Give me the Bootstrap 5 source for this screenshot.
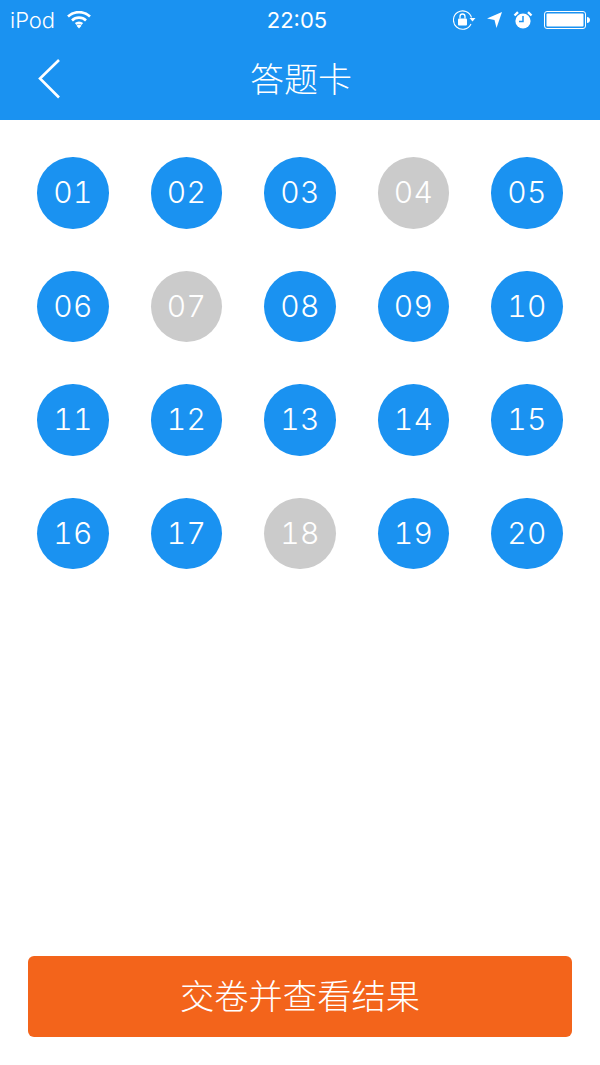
<!DOCTYPE html>
<html lang="zh">
<head>
<meta charset="utf-8">
<title>答题卡</title>
<link rel="stylesheet" href="https://cdn.jsdelivr.net/npm/bootstrap@5.3.0/dist/css/bootstrap.min.css">
<style>
html,body{height:100%;}
body{font-family:Inter,"Noto Sans CJK SC",sans-serif;background:#fff;overflow:hidden;}
.app-screen{height:1065px;width:600px;}
.top-area{background:#1a92f1;color:#fff;height:120px;flex:none;}
.status-row{height:40px;padding:0 10px;font-size:22px;font-weight:300;line-height:40px;}
.status-left{width:197px;gap:12px;}
.status-right{width:203px;gap:11px;}
.clock{font-size:22px;font-weight:400;}
.title-row{height:80px;padding:0 0 4px 2px;}
.title-text{font-family:"Noto Sans CJK SC",sans-serif;font-size:34px;font-weight:300;line-height:1;margin:0;}
.back-link{left:37px;top:18px;width:26px;height:42px;}
.sheet{display:grid;grid-template-columns:repeat(5,71.5px);gap:42px;padding:37.25px 37.25px 0;}
.num-dot{width:71.5px;height:71.5px;border-radius:50%;background:#1a92f1;color:#fff;font-family:Inter,sans-serif;font-size:30px;font-weight:280;font-variant-numeric:tabular-nums;letter-spacing:.4px;padding-bottom:1px;}
.num-dot.skipped{background:#cbcbcb;}
.submit-btn{width:544px;height:81px;margin:0 28px 28px;padding:0 0 4px;background:#f3641b;border:0;border-radius:6px;color:#fff;font-family:"Noto Sans CJK SC",sans-serif;font-size:34.300px;font-weight:300;line-height:1;}
.submit-btn:hover{background:#f3641b;color:#fff;}
</style>
</head>
<body>
<div class="app-screen d-flex flex-column">
  <header class="top-area">
    <div class="status-row d-flex justify-content-between align-items-center">
      <div class="status-left d-flex align-items-center">
        <span>iPod</span>
        <svg width="24" height="18" viewBox="0 0 24 18" fill="none" stroke="#fff" stroke-width="2.600"><path d="M1 5.500a16 16 0 0 1 22 0"/><path d="M5 9.500a10 10 0 0 1 14 0"/><path d="M8.700 13a5 5 0 0 1 6.600 0"/><path d="M12 17.500l-2.500-2.800a3.600 3.600 0 0 1 5 0z" fill="#fff" stroke="none"/></svg>
      </div>
      <div class="clock">22:05</div>
      <div class="status-right d-flex align-items-center justify-content-end">
        <svg width="23" height="20" viewBox="0 0 23 20"><path d="M18 14A9.200 9.200 0 1 1 18.500 7.500" fill="none" stroke="#fff" stroke-width="1.100"/><path d="M16.500 8h6l-3 3.500z" fill="#fff"/><rect x="5" y="8.500" width="9" height="7" rx="1" fill="#fff"/><path d="M7 8.500V6.500a2.500 2.500 0 0 1 5 0v2" fill="none" stroke="#fff" stroke-width="1.300"/></svg>
        <svg width="15" height="16" viewBox="0 0 15 16"><path d="M15 0 9.500 16 7.500 8 0 6.500z" fill="#fff"/></svg>
        <svg width="20" height="18" viewBox="0 0 20 18"><circle cx="10" cy="10" r="7.600" fill="#fff"/><path d="M10 5v5.500H6" fill="none" stroke="#1a92f1" stroke-width="1.500"/><path d="M1.500 4.500 5 1.200M18.500 4.500 15 1.200" stroke="#fff" stroke-width="2.400"/></svg>
        <svg width="46" height="18" viewBox="0 0 46 18"><rect x=".5" y=".5" width="41" height="17" rx="2.500" fill="none" stroke="#fff" stroke-width="1"/><rect x="2.500" y="2.500" width="37" height="13" rx="1" fill="#fff"/><path d="M43 6c1.500 0 3 1 3 3s-1.500 3-3 3z" fill="#fff"/></svg>
      </div>
    </div>
    <div class="title-row position-relative d-flex align-items-center justify-content-center">
      <a href="#" class="back-link position-absolute" aria-label="返回">
        <svg width="26" height="42" viewBox="0 0 26 42" fill="none" stroke="#fff" stroke-width="2.600" class="d-block"><path d="M22 2 3 20.500 22 39.500"/></svg>
      </a>
      <h1 class="title-text">答题卡</h1>
    </div>
  </header>
  <main class="sheet flex-grow-1 align-content-start">
    <div class="num-dot d-flex align-items-center justify-content-center">01</div>
    <div class="num-dot d-flex align-items-center justify-content-center">02</div>
    <div class="num-dot d-flex align-items-center justify-content-center">03</div>
    <div class="num-dot skipped d-flex align-items-center justify-content-center">04</div>
    <div class="num-dot d-flex align-items-center justify-content-center">05</div>
    <div class="num-dot d-flex align-items-center justify-content-center">06</div>
    <div class="num-dot skipped d-flex align-items-center justify-content-center">07</div>
    <div class="num-dot d-flex align-items-center justify-content-center">08</div>
    <div class="num-dot d-flex align-items-center justify-content-center">09</div>
    <div class="num-dot d-flex align-items-center justify-content-center">10</div>
    <div class="num-dot d-flex align-items-center justify-content-center">11</div>
    <div class="num-dot d-flex align-items-center justify-content-center">12</div>
    <div class="num-dot d-flex align-items-center justify-content-center">13</div>
    <div class="num-dot d-flex align-items-center justify-content-center">14</div>
    <div class="num-dot d-flex align-items-center justify-content-center">15</div>
    <div class="num-dot d-flex align-items-center justify-content-center">16</div>
    <div class="num-dot d-flex align-items-center justify-content-center">17</div>
    <div class="num-dot skipped d-flex align-items-center justify-content-center">18</div>
    <div class="num-dot d-flex align-items-center justify-content-center">19</div>
    <div class="num-dot d-flex align-items-center justify-content-center">20</div>
  </main>
  <button type="button" class="btn submit-btn">交卷并查看结果</button>
</div>
<script src="https://cdn.jsdelivr.net/npm/bootstrap@5.3.0/dist/js/bootstrap.bundle.min.js"></script>
</body>
</html>
